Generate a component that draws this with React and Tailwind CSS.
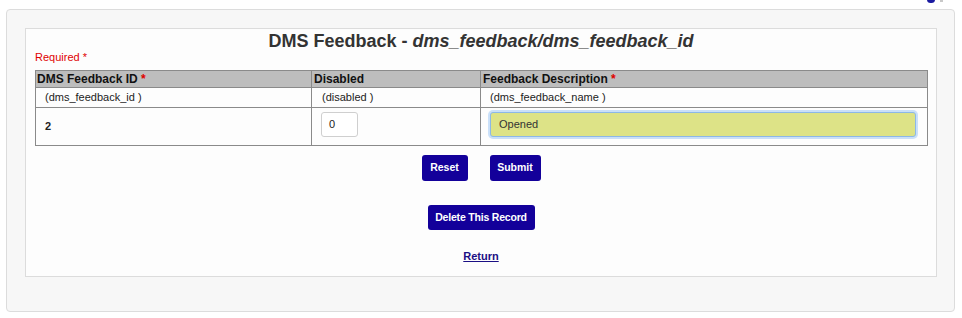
import React from "react";

export default function App() {
  return (
    <div className="relative w-[962px] h-[318px] bg-white pt-[9px] pl-[6px] font-['Liberation_Sans',Arial,sans-serif] text-[#222]">
      <div className="absolute left-[927px] top-[-4px] w-[8px] h-[7px] rounded-full bg-[#1a1aa0]" />
      <div className="absolute left-[940px] top-[-3px] w-[3px] h-[5px] bg-[#c8c8c8]" />
      <div className="w-[949px] h-[303px] border border-[#dcdcdc] rounded-[4px] bg-[#f7f7f7] pt-[18px] pl-[18px]">
        <div className="w-[912px] h-[249px] border border-[#dcdcdc] bg-[#fdfdfd] px-[9px]">
          <h1 className="mt-[2px] text-center text-[18px] leading-[20px] font-bold text-[#333]">
            DMS Feedback - <i>dms_feedback/dms_feedback_id</i>
          </h1>
          <div className="text-[11px] leading-[13px] text-[#e00000]">Required *</div>
          <table className="mt-[6px] w-[892px] border-collapse table-fixed text-left">
            <colgroup>
              <col className="w-[276px]" />
              <col className="w-[169px]" />
              <col className="w-[447px]" />
            </colgroup>
            <thead>
              <tr className="h-[17px] bg-[#bdbdbd]">
                <th className="border border-[#8a8a8a] px-[1px] py-0 text-[12px] leading-[14px] font-bold text-[#111]">
                  DMS Feedback ID <span className="text-[#e00000]">*</span>
                </th>
                <th className="border border-[#8a8a8a] px-[2px] py-0 text-[12px] leading-[14px] font-bold text-[#111]">
                  Disabled
                </th>
                <th className="border border-[#8a8a8a] px-[2px] py-0 text-[12px] leading-[14px] font-bold text-[#111]">
                  Feedback Description <span className="text-[#e00000]">*</span>
                </th>
              </tr>
            </thead>
            <tbody>
              <tr className="h-[20px]">
                <td className="border border-[#8a8a8a] pl-[9px] py-0 text-[11px] leading-[13px] text-[#222]">(dms_feedback_id )</td>
                <td className="border border-[#8a8a8a] pl-[10px] py-0 text-[11px] leading-[13px] text-[#222]">(disabled )</td>
                <td className="border border-[#8a8a8a] pl-[9px] py-0 text-[11px] leading-[13px] text-[#222]">(dms_feedback_name )</td>
              </tr>
              <tr className="h-[38px]">
                <td className="border border-[#8a8a8a] pl-[9px] py-0 align-middle text-[11px] leading-[13px] font-bold text-[#222]">2</td>
                <td className="border border-[#8a8a8a] pl-[9px] pt-[4px] pb-0 align-top">
                  <div className="w-[37px] h-[25px] border border-[#cfcfcf] rounded-[3px] bg-white pl-[7px] flex items-center text-[11px] text-[#222]">
                    0
                  </div>
                </td>
                <td className="border border-[#8a8a8a] pl-[9px] pt-[4px] pb-0 align-top">
                  <div className="w-[426px] h-[25px] border border-[#8cb8e8] rounded-[3px] bg-[#dde387] shadow-[0_0_0_2px_rgba(160,200,245,0.55)] pl-[8px] flex items-center text-[11px] text-[#333]">
                    Opened
                  </div>
                </td>
              </tr>
            </tbody>
          </table>
          <div className="mt-[9px] flex justify-center gap-[22px]">
            <button className="w-[46px] h-[26px] rounded-[3px] bg-[#13009a] text-white text-[10.5px] font-bold">Reset</button>
            <button className="w-[51px] h-[26px] rounded-[3px] bg-[#13009a] text-white text-[10.5px] font-bold">Submit</button>
          </div>
          <div className="mt-[24px] flex justify-center">
            <button className="w-[107px] h-[25px] rounded-[3px] bg-[#13009a] text-white text-[10.5px] font-bold tracking-[-0.2px]">Delete This Record</button>
          </div>
          <div className="mt-[20px] flex justify-center">
            <a href="#" className="text-[11px] leading-[13px] font-bold text-[#1b0f84] underline">Return</a>
          </div>
        </div>
      </div>
    </div>
  );
}
